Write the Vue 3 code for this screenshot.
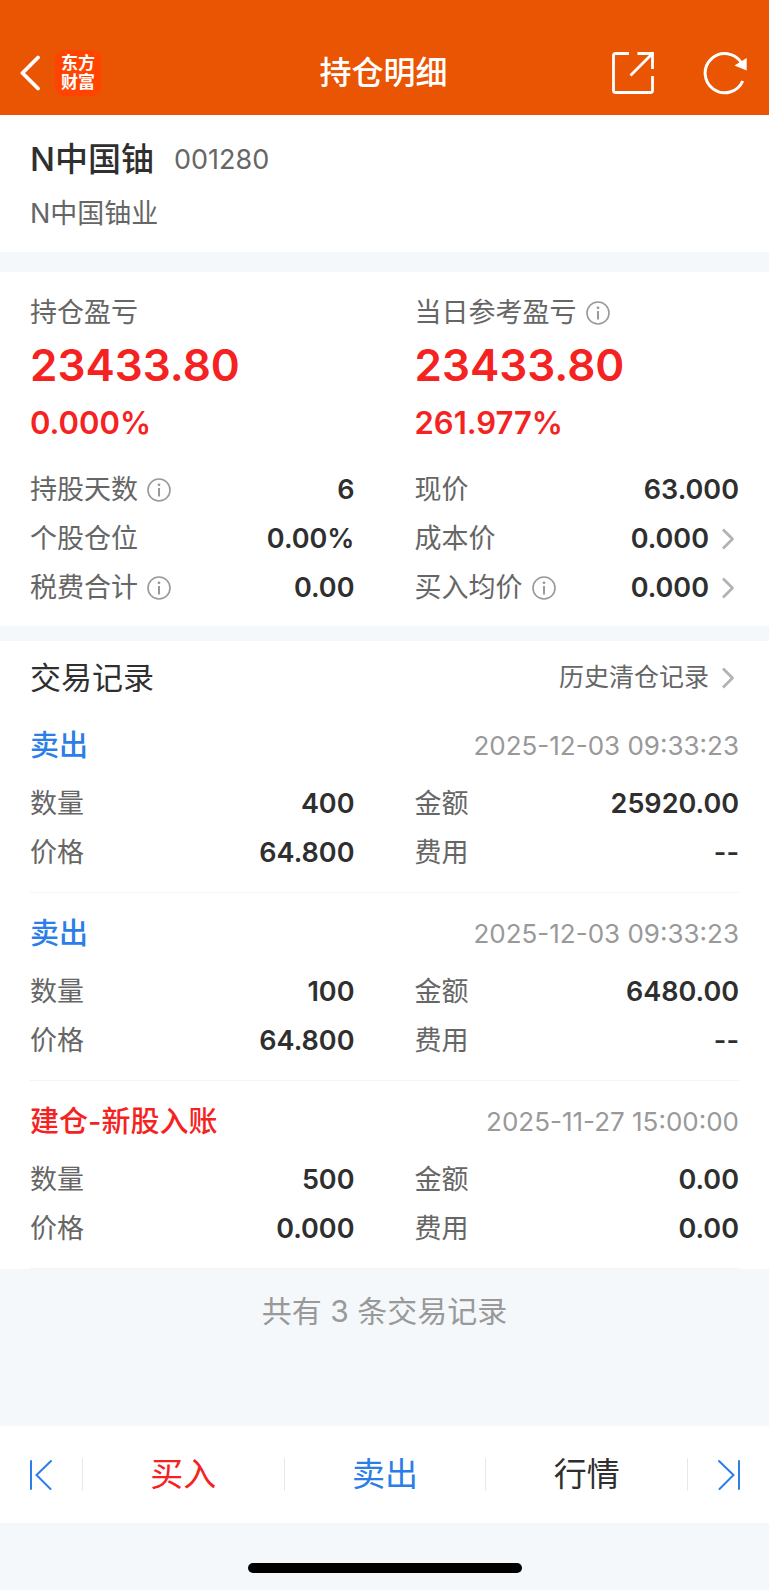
<template>
  <div class="page">
    <header class="nav-bar">
      <div class="nav-left">
        <button class="icon-button" aria-label="返回">
          <svg width="20" height="36" viewBox="0 0 20 36" fill="none">
            <path d="M18 2.5L2.5 18L18 33.5" stroke="currentColor" stroke-width="3.8" stroke-linecap="round" stroke-linejoin="round"/>
          </svg>
        </button>
        <span class="logo">
          <span>东方</span>
          <span>财富</span>
        </span>
      </div>
      <h1 class="nav-title">持仓明细</h1>
      <div class="nav-right">
        <button class="icon-button" aria-label="分享">
          <svg width="44" height="44" viewBox="0 0 44 44" fill="none" stroke="currentColor" stroke-width="2.8">
            <path d="M18 2.5H4.5Q2.5 2.5 2.5 4.5V39.5Q2.5 41.5 4.5 41.5H39.5Q41.5 41.5 41.5 39.5V25"/>
            <path d="M26.5 2.5H41.5V18M41 3L19.5 24.5"/>
          </svg>
        </button>
        <button class="icon-button" aria-label="刷新" @click="refresh">
          <svg width="44" height="44" viewBox="0 0 44 44" fill="none">
            <path d="M39.7 30A19.6 19.6 0 1 1 38.5 12" stroke="currentColor" stroke-width="3"/>
            <path d="M43.7 7V19.5L31.5 14.5Z" fill="currentColor"/>
          </svg>
        </button>
      </div>
    </header>

    <section class="stock">
      <div class="stock-head">
        <h2 class="stock-name">{{ stock.name }}</h2>
        <span class="stock-code">{{ stock.code }}</span>
      </div>
      <p class="stock-company">{{ stock.company }}</p>
    </section>

    <section class="summary">
      <div class="columns">
        <div v-for="item in profits" :key="item.label" class="profit">
          <div class="label">
            {{ item.label }}
            <button v-if="item.info" class="info-button" aria-label="说明">
              <svg width="24" height="24" viewBox="0 0 24 24" fill="none">
                <circle cx="12" cy="12" r="11" stroke="currentColor" stroke-width="1.6"/>
                <path d="M12 10V18.5" stroke="currentColor" stroke-width="2"/>
                <circle cx="12" cy="6.8" r="1.4" fill="currentColor"/>
              </svg>
            </button>
          </div>
          <div class="profit-amount">{{ item.amount }}</div>
          <div class="profit-rate">{{ item.rate }}</div>
        </div>
      </div>
      <dl class="columns">
        <div v-for="item in details" :key="item.label" class="field">
          <dt class="label">
            {{ item.label }}
            <button v-if="item.info" class="info-button" aria-label="说明">
              <svg width="24" height="24" viewBox="0 0 24 24" fill="none">
                <circle cx="12" cy="12" r="11" stroke="currentColor" stroke-width="1.6"/>
                <path d="M12 10V18.5" stroke="currentColor" stroke-width="2"/>
                <circle cx="12" cy="6.8" r="1.4" fill="currentColor"/>
              </svg>
            </button>
          </dt>
          <dd class="value">
            <a v-if="item.link" class="more" href="#">
              {{ item.value }}
              <svg class="arrow" width="14" height="22" viewBox="0 0 14 22" fill="none">
                <path d="M2 1.5L11.5 11L2 20.5" stroke="currentColor" stroke-width="2.8" stroke-linejoin="round"/>
              </svg>
            </a>
            <template v-else>{{ item.value }}</template>
          </dd>
        </div>
      </dl>
    </section>

    <section class="trades">
      <div class="trades-head">
        <h2 class="trades-title">交易记录</h2>
        <a class="more history" href="#">
          历史清仓记录
          <svg class="arrow" width="14" height="22" viewBox="0 0 14 22" fill="none">
            <path d="M2 1.5L11.5 11L2 20.5" stroke="currentColor" stroke-width="2.8" stroke-linejoin="round"/>
          </svg>
        </a>
      </div>
      <article v-for="(record, index) in records" :key="index" class="record">
        <div class="record-head">
          <h3 class="record-type" :class="record.side">{{ record.type }}</h3>
          <time class="record-time">{{ record.time }}</time>
        </div>
        <dl class="columns">
          <div v-for="field in record.fields" :key="field[0]" class="field">
            <dt class="label">{{ field[0] }}</dt>
            <dd class="value">{{ field[1] }}</dd>
          </div>
        </dl>
      </article>
    </section>

    <p class="total">共有 {{ records.length }} 条交易记录</p>

    <footer class="bottom">
      <nav class="actions">
        <button class="action step" aria-label="上一只">
          <svg width="24" height="32" viewBox="0 0 24 32" fill="none" stroke="currentColor" stroke-width="2" stroke-linecap="round">
            <path d="M2 2V30M22 2L7.5 16L21.5 30"/>
          </svg>
        </button>
        <button class="action buy">买入</button>
        <button class="action sell">卖出</button>
        <button class="action">行情</button>
        <button class="action step" aria-label="下一只">
          <svg width="24" height="32" viewBox="0 0 24 32" fill="none" stroke="currentColor" stroke-width="2" stroke-linecap="round">
            <path d="M22 2V30M2 2L16.5 16L2.5 30"/>
          </svg>
        </button>
      </nav>
      <div class="home-indicator"></div>
    </footer>
  </div>
</template>

<script setup>
import { ref } from 'vue'

const stock = { name: 'N中国铀', code: '001280', company: 'N中国铀业' }

const profits = [
  { label: '持仓盈亏', amount: '23433.80', rate: '0.000%' },
  { label: '当日参考盈亏', amount: '23433.80', rate: '261.977%', info: true }
]

// 左右两列交替排列
const details = [
  { label: '持股天数', value: '6', info: true },
  { label: '现价', value: '63.000' },
  { label: '个股仓位', value: '0.00%' },
  { label: '成本价', value: '0.000', link: true },
  { label: '税费合计', value: '0.00', info: true },
  { label: '买入均价', value: '0.000', info: true, link: true }
]

const loadRecords = () => [
  {
    type: '卖出',
    side: 'sell',
    time: '2025-12-03 09:33:23',
    fields: [['数量', '400'], ['金额', '25920.00'], ['价格', '64.800'], ['费用', '--']]
  },
  {
    type: '卖出',
    side: 'sell',
    time: '2025-12-03 09:33:23',
    fields: [['数量', '100'], ['金额', '6480.00'], ['价格', '64.800'], ['费用', '--']]
  },
  {
    type: '建仓-新股入账',
    side: 'buy',
    time: '2025-11-27 15:00:00',
    fields: [['数量', '500'], ['金额', '0.00'], ['价格', '0.000'], ['费用', '0.00']]
  }
]

const records = ref(loadRecords())

const refresh = () => {
  records.value = loadRecords()
}
</script>

<style>
body {
  margin: 0;
  background: #f4f8fa;
}
</style>

<style scoped>
.page {
  min-height: 100vh;
  display: flex;
  flex-direction: column;
  background: #f4f8fa;
  color: #2f2f2f;
  font-family: Inter, 'Noto Sans CJK SC', sans-serif;
  font-size: 27px;
  line-height: 49px;
}

h1,
h2,
h3,
p,
dl,
dd {
  margin: 0;
}

button {
  padding: 0;
  border: none;
  background: none;
  color: inherit;
  font: inherit;
  cursor: pointer;
}

a {
  color: inherit;
  text-decoration: none;
}

svg {
  display: block;
}

.nav-bar {
  display: grid;
  grid-template-columns: 1fr auto 1fr;
  align-items: center;
  height: 85px;
  padding: 30px 22px 0 20px;
  background: #ea5504;
  color: #ffffff;
}

.nav-left,
.nav-right {
  display: flex;
  align-items: center;
}

.nav-left {
  gap: 15px;
}

.nav-right {
  justify-content: flex-end;
  gap: 48px;
}

.logo {
  display: flex;
  flex-direction: column;
  align-items: center;
  justify-content: center;
  width: 46px;
  height: 46px;
  border-radius: 9px;
  background: #ff4400;
  font-size: 17px;
  font-weight: 700;
  line-height: 19px;
}

.nav-title {
  font-size: 32px;
  font-weight: 500;
}

.stock {
  margin-bottom: 20px;
  padding: 20px 30px 14px;
  background: #ffffff;
}

.stock-head {
  display: flex;
  align-items: center;
  gap: 20px;
  margin-bottom: 5px;
}

.stock-name {
  font-size: 33px;
  font-weight: 500;
}

.stock-code,
.stock-company {
  color: #666666;
}

.summary {
  margin-bottom: 15px;
  padding: 16px 30px 14px;
  background: #ffffff;
}

.columns {
  display: grid;
  grid-template-columns: 1fr 1fr;
  column-gap: 60px;
}

.profit {
  color: #f52222;
  font-weight: 600;
}

.profit-amount {
  font-size: 44px;
  line-height: 56px;
}

.profit-rate {
  margin-bottom: 12px;
  font-size: 31px;
  line-height: 60px;
}

.label {
  display: flex;
  align-items: center;
  gap: 9px;
  color: #666666;
  font-weight: 400;
}

.info-button {
  color: #999999;
}

.field {
  display: flex;
  justify-content: space-between;
}

.value {
  font-weight: 600;
}

.more {
  display: flex;
  align-items: center;
  gap: 12px;
}

.arrow {
  margin-right: 4px;
  color: #b3b3b3;
}

.trades {
  background: #ffffff;
}

.trades-head {
  display: flex;
  justify-content: space-between;
  padding: 12px 30px 3px;
}

.trades-title {
  font-size: 31px;
  font-weight: 400;
}

.history {
  color: #666666;
  font-size: 25px;
}

.record {
  margin: 0 30px;
  padding: 16px 0 15px;
  border-bottom: 1px solid #f2f4f5;
}

.record-head {
  display: flex;
  justify-content: space-between;
  margin-bottom: 9px;
}

.record-type {
  font-size: 29px;
  font-weight: 500;
}

.record-time {
  color: #999999;
  font-size: 26px;
}

.buy {
  color: #f52222;
}

.sell {
  color: #2b7ee8;
}

.total {
  padding: 18px 30px;
  color: #999999;
  font-size: 30px;
  text-align: center;
}

.bottom {
  margin-top: auto;
}

.actions {
  display: flex;
  align-items: center;
  height: 97px;
  background: #ffffff;
}

.action {
  flex: 1;
  height: 33px;
  font-size: 33px;
  line-height: 33px;
}

.action + .action {
  border-left: 1px solid #e8e8e8;
}

.step {
  display: flex;
  flex: 0 0 82px;
  align-items: center;
  justify-content: center;
  color: #2b7ee8;
}

.home-indicator {
  width: 274px;
  height: 10px;
  margin: 40px auto 17px;
  border-radius: 5px;
  background: #000000;
}
</style>
